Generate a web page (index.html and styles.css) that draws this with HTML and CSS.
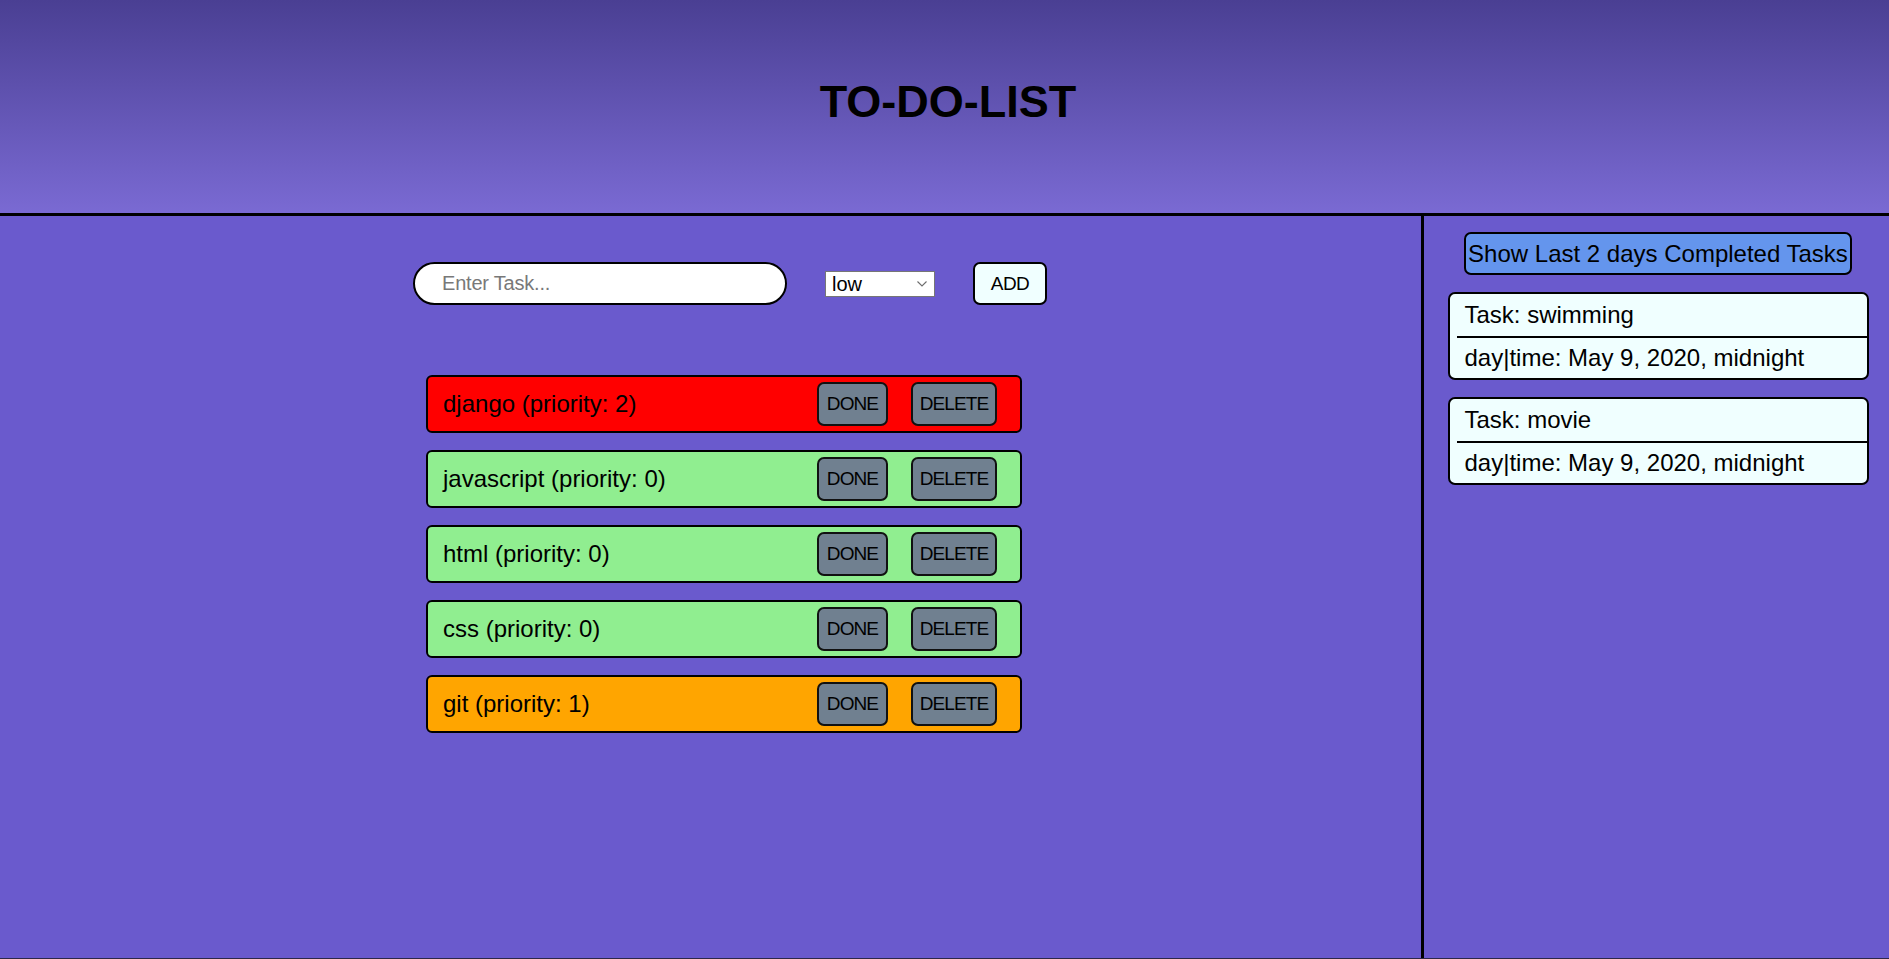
FILE: index.html
```html
<!DOCTYPE html>
<html lang="en">
<head>
<meta charset="utf-8">
<title>TO-DO-LIST</title>
<link rel="stylesheet" href="styles.css">
</head>
<body>
<header class="header">
  <h1 class="title">TO-DO-LIST</h1>
</header>
<div class="layout">
  <main class="main">
    <form class="add-form">
      <input class="task-input" type="text" placeholder="Enter Task...">
      <div class="select-wrap">
        <select class="priority">
          <option>low</option>
          <option>medium</option>
          <option>high</option>
        </select>
        <svg class="chevron" viewBox="0 0 10 6" width="10" height="6"><path d="M0.5 0.5 L5 5 L9.5 0.5" fill="none" stroke="#6d6d6d" stroke-width="1.1"/></svg>
      </div>
      <button class="add-btn" type="button">ADD</button>
    </form>
    <ul class="task-list">
      <li class="task task--high">
        <span class="task-name">django (priority: 2)</span>
        <div class="task-actions"><button class="task-btn task-btn--done" type="button">DONE</button><button class="task-btn task-btn--delete" type="button">DELETE</button></div>
      </li>
      <li class="task task--low">
        <span class="task-name">javascript (priority: 0)</span>
        <div class="task-actions"><button class="task-btn task-btn--done" type="button">DONE</button><button class="task-btn task-btn--delete" type="button">DELETE</button></div>
      </li>
      <li class="task task--low">
        <span class="task-name">html (priority: 0)</span>
        <div class="task-actions"><button class="task-btn task-btn--done" type="button">DONE</button><button class="task-btn task-btn--delete" type="button">DELETE</button></div>
      </li>
      <li class="task task--low">
        <span class="task-name">css (priority: 0)</span>
        <div class="task-actions"><button class="task-btn task-btn--done" type="button">DONE</button><button class="task-btn task-btn--delete" type="button">DELETE</button></div>
      </li>
      <li class="task task--medium">
        <span class="task-name">git (priority: 1)</span>
        <div class="task-actions"><button class="task-btn task-btn--done" type="button">DONE</button><button class="task-btn task-btn--delete" type="button">DELETE</button></div>
      </li>
    </ul>
  </main>
  <aside class="sidebar">
    <button class="show-btn" type="button">Show Last 2 days Completed Tasks</button>
    <div class="done-card">
      <div class="done-task">Task: swimming</div>
      <div class="done-time">day|time: May 9, 2020, midnight</div>
    </div>
    <div class="done-card">
      <div class="done-task">Task: movie</div>
      <div class="done-time">day|time: May 9, 2020, midnight</div>
    </div>
  </aside>
</div>
</body>
</html>
```
FILE: styles.css
```css
html, body {
  margin: 0;
  padding: 0;
}

body {
  font-family: "Liberation Sans", Arial, sans-serif;
  background: #6a5acd;
  color: #000;
  overflow: hidden;
}

.header {
  height: 213px;
  border-bottom: 3px solid #000;
  background: linear-gradient(to bottom, #4a3f93, #7a6ad3);
  display: flex;
  justify-content: center;
  align-items: center;
}

.title {
  margin: 0 0 10px;
  padding-left: 7px;
  font-size: 45px;
  font-weight: bold;
  color: #000;
}

.layout {
  display: flex;
  height: 742px;
  border-bottom: 1px solid #2d2848;
}

.main {
  width: 1421px;
  flex: none;
  padding-top: 46px;
  box-sizing: border-box;
}

.add-form {
  display: flex;
  align-items: center;
  gap: 38px;
  margin: 0 0 0 413px;
}

.task-input {
  width: 374px;
  height: 43px;
  box-sizing: border-box;
  border: 2px solid #000;
  border-radius: 22px;
  padding: 0 0 0 27px;
  background: #fff;
  font: 20px "Liberation Sans", Arial, sans-serif;
  letter-spacing: -0.2px;
  outline: none;
}

.task-input::placeholder {
  color: #787878;
}

.select-wrap {
  position: relative;
  width: 110px;
  height: 26px;
}

.priority {
  appearance: none;
  -webkit-appearance: none;
  width: 100%;
  height: 100%;
  box-sizing: border-box;
  border: 1px solid #767676;
  border-radius: 0;
  background: #fff;
  color: #000;
  padding: 0 0 0 6px;
  font: 20px "Liberation Sans", Arial, sans-serif;
  outline: none;
}

.chevron {
  position: absolute;
  right: 8px;
  top: 10px;
  pointer-events: none;
}

.add-btn {
  width: 74px;
  height: 43px;
  box-sizing: border-box;
  border: 2px solid #000;
  border-radius: 7px;
  background: #f0ffff;
  color: #000;
  padding: 0;
  font: 19px "Liberation Sans", Arial, sans-serif;
  letter-spacing: -0.6px;
}

.task-list {
  list-style: none;
  margin: 70px 0 0 426px;
  padding: 0;
  width: 596px;
  display: flex;
  flex-direction: column;
  gap: 17px;
}

.task {
  height: 58px;
  box-sizing: border-box;
  border: 2px solid #000;
  border-radius: 6px;
  display: flex;
  align-items: center;
  padding: 0 23px 0 15px;
  font-size: 24px;
}

.task--high { background: #ff0000; }
.task--low { background: #90ee90; }
.task--medium { background: #ffa500; }

.task-name {
  flex: 1;
}

.task-actions {
  display: flex;
  gap: 23px;
}

.task-btn {
  height: 44px;
  box-sizing: border-box;
  background: #708090;
  border: 2px solid #111;
  border-radius: 7px;
  color: #000;
  padding: 0;
  font: 19px "Liberation Sans", Arial, sans-serif;
  letter-spacing: -0.9px;
}

.task-btn--done { width: 71px; }
.task-btn--delete { width: 86px; }

.sidebar {
  flex: 1;
  border-left: 3px solid #000;
  padding: 16px 0 0 3px;
  display: flex;
  flex-direction: column;
  align-items: center;
  gap: 17px;
}

.show-btn {
  width: 388px;
  height: 43px;
  box-sizing: border-box;
  background: #6495ed;
  border: 2px solid #000;
  border-radius: 7px;
  color: #000;
  padding: 0;
  font: 24px "Liberation Sans", Arial, sans-serif;
  white-space: nowrap;
}

.done-card {
  width: 421px;
  box-sizing: border-box;
  border: 2px solid #000;
  border-radius: 7px;
  background: #f0ffff;
  font-size: 24px;
}

.done-task {
  height: 42px;
  line-height: 42px;
  border-bottom: 2px solid #000;
  margin: 0 -2px 0 7px;
  padding-left: 8px;
}

.done-time {
  height: 40px;
  line-height: 40px;
  padding-left: 15px;
}
```
